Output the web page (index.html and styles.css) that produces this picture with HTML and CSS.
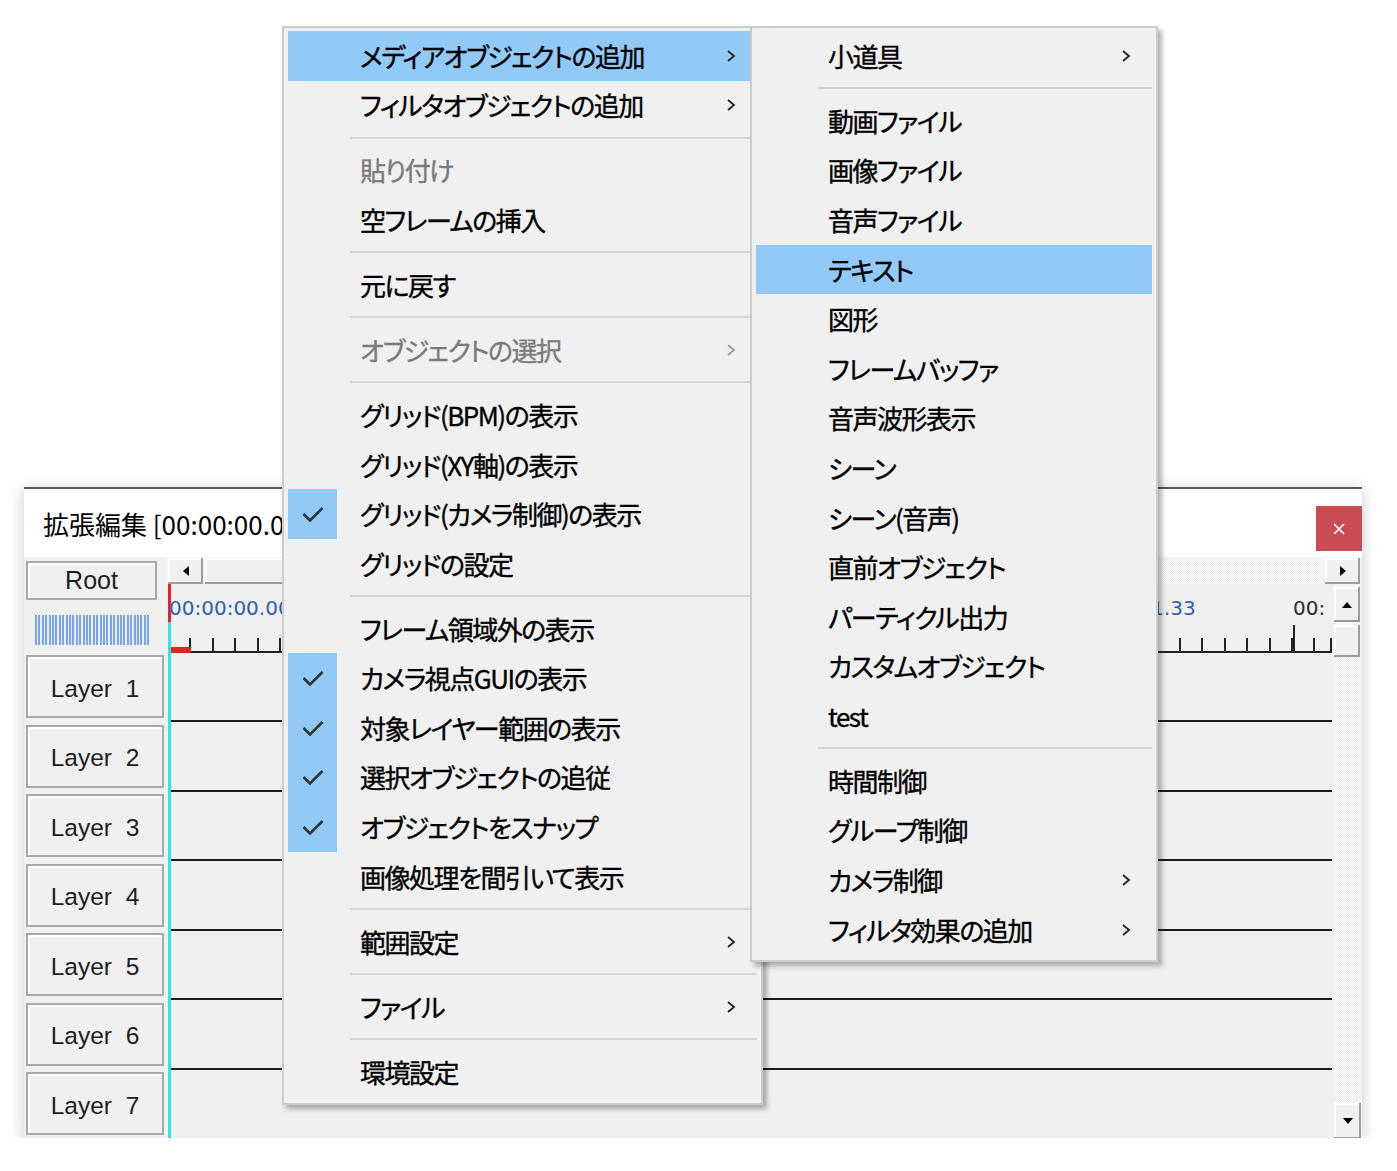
FILE: index.html
```html
<!DOCTYPE html>
<html lang="ja">
<head>
    <meta charset="UTF-8">
    <title>拡張編集</title>
    <link rel="stylesheet" href="styles.css">
</head>
<body>
    <!-- タイムラインウィンドウ -->
    <div class="window">
        <div class="titlebar">
            <span class="title">拡張編集 [00:00:00.00] [1/1]</span>
            <button class="close-btn">
                <svg width="12" height="12" viewBox="0 0 12 12"><path d="M1 1l10 10M11 1L1 11" stroke="#fff" stroke-width="1.7"/></svg>
            </button>
        </div>
        <div class="client">
            <div class="head-top">
                <button class="btn root-btn">Root</button>
                <div class="meter"></div>
            </div>

            <div class="hscroll">
                <button class="btn harrow">
                    <svg width="6" height="10" viewBox="0 0 6 10"><path d="M6 0v10L0 5z" fill="#000"/></svg>
                </button>
                <div class="btn hthumb"></div>
                <div class="spacer"></div>
                <button class="btn harrow">
                    <svg width="6" height="10" viewBox="0 0 6 10"><path d="M0 0v10l6-5z" fill="#000"/></svg>
                </button>
            </div>

            <div class="ruler">
                <span class="time t0">00:00:00.00</span>
                <span class="time t1">00:00:01.33</span>
                <span class="time t2 dark">00:</span>
                <div class="major m2"></div>
                <div class="ticks"></div>
                <div class="cursor-mark"></div>
            </div>

            <div class="vscroll">
                <button class="btn vup">
                    <svg width="10" height="6" viewBox="0 0 10 6"><path d="M0 6h10L5 0z" fill="#000"/></svg>
                </button>
                <div class="btn vthumb"></div>
                <div class="spacer"></div>
                <button class="btn vdown">
                    <svg width="10" height="6" viewBox="0 0 10 6"><path d="M0 0h10L5 6z" fill="#000"/></svg>
                </button>
            </div>

            <div class="layers">
                <div class="layer-row"><button class="btn layer-btn">Layer  1</button></div>
                <div class="layer-row"><button class="btn layer-btn">Layer  2</button></div>
                <div class="layer-row"><button class="btn layer-btn">Layer  3</button></div>
                <div class="layer-row"><button class="btn layer-btn">Layer  4</button></div>
                <div class="layer-row"><button class="btn layer-btn">Layer  5</button></div>
                <div class="layer-row"><button class="btn layer-btn">Layer  6</button></div>
                <div class="layer-row"><button class="btn layer-btn">Layer  7</button></div>
            </div>

            <div class="tracks">
                <div class="track"></div>
                <div class="track"></div>
                <div class="track"></div>
                <div class="track"></div>
                <div class="track"></div>
                <div class="track"></div>
                <div class="track"></div>
            </div>
        </div>
    </div>

    <!-- 右クリックメニュー -->
    <div class="menu main-menu">
        <div class="item active"><span class="check"></span><span class="label">メディアオブジェクトの追加</span><span class="sub"><svg width="10" height="14" viewBox="0 0 10 14"><path d="M2 2l6 5-6 5" fill="none" stroke="currentColor" stroke-width="1.8"/></svg></span></div>
        <div class="item"><span class="check"></span><span class="label">フィルタオブジェクトの追加</span><span class="sub"><svg width="10" height="14" viewBox="0 0 10 14"><path d="M2 2l6 5-6 5" fill="none" stroke="currentColor" stroke-width="1.8"/></svg></span></div>
        <div class="sep"></div>
        <div class="item disabled"><span class="check"></span><span class="label">貼り付け</span><span class="sub"></span></div>
        <div class="item"><span class="check"></span><span class="label">空フレームの挿入</span><span class="sub"></span></div>
        <div class="sep"></div>
        <div class="item"><span class="check"></span><span class="label">元に戻す</span><span class="sub"></span></div>
        <div class="sep"></div>
        <div class="item disabled"><span class="check"></span><span class="label">オブジェクトの選択</span><span class="sub"><svg width="10" height="14" viewBox="0 0 10 14"><path d="M2 2l6 5-6 5" fill="none" stroke="currentColor" stroke-width="1.8"/></svg></span></div>
        <div class="sep"></div>
        <div class="item"><span class="check"></span><span class="label">グリッド(BPM)の表示</span><span class="sub"></span></div>
        <div class="item"><span class="check"></span><span class="label">グリッド(XY軸)の表示</span><span class="sub"></span></div>
        <div class="item checked"><span class="check"><svg width="22" height="16" viewBox="0 0 22 16"><path d="M1.5 8l6.5 6.5L20.5 2" fill="none" stroke="#333" stroke-width="2.6"/></svg></span><span class="label">グリッド(カメラ制御)の表示</span><span class="sub"></span></div>
        <div class="item"><span class="check"></span><span class="label">グリッドの設定</span><span class="sub"></span></div>
        <div class="sep"></div>
        <div class="item"><span class="check"></span><span class="label">フレーム領域外の表示</span><span class="sub"></span></div>
        <div class="item checked"><span class="check"><svg width="22" height="16" viewBox="0 0 22 16"><path d="M1.5 8l6.5 6.5L20.5 2" fill="none" stroke="#333" stroke-width="2.6"/></svg></span><span class="label">カメラ視点GUIの表示</span><span class="sub"></span></div>
        <div class="item checked"><span class="check"><svg width="22" height="16" viewBox="0 0 22 16"><path d="M1.5 8l6.5 6.5L20.5 2" fill="none" stroke="#333" stroke-width="2.6"/></svg></span><span class="label">対象レイヤー範囲の表示</span><span class="sub"></span></div>
        <div class="item checked"><span class="check"><svg width="22" height="16" viewBox="0 0 22 16"><path d="M1.5 8l6.5 6.5L20.5 2" fill="none" stroke="#333" stroke-width="2.6"/></svg></span><span class="label">選択オブジェクトの追従</span><span class="sub"></span></div>
        <div class="item checked"><span class="check"><svg width="22" height="16" viewBox="0 0 22 16"><path d="M1.5 8l6.5 6.5L20.5 2" fill="none" stroke="#333" stroke-width="2.6"/></svg></span><span class="label">オブジェクトをスナップ</span><span class="sub"></span></div>
        <div class="item"><span class="check"></span><span class="label">画像処理を間引いて表示</span><span class="sub"></span></div>
        <div class="sep"></div>
        <div class="item"><span class="check"></span><span class="label">範囲設定</span><span class="sub"><svg width="10" height="14" viewBox="0 0 10 14"><path d="M2 2l6 5-6 5" fill="none" stroke="currentColor" stroke-width="1.8"/></svg></span></div>
        <div class="sep"></div>
        <div class="item"><span class="check"></span><span class="label">ファイル</span><span class="sub"><svg width="10" height="14" viewBox="0 0 10 14"><path d="M2 2l6 5-6 5" fill="none" stroke="currentColor" stroke-width="1.8"/></svg></span></div>
        <div class="sep"></div>
        <div class="item"><span class="check"></span><span class="label">環境設定</span><span class="sub"></span></div>
    </div>

    <!-- メディアオブジェクトのサブメニュー -->
    <div class="menu sub-menu">
        <div class="item"><span class="check"></span><span class="label">小道具</span><span class="sub"><svg width="10" height="14" viewBox="0 0 10 14"><path d="M2 2l6 5-6 5" fill="none" stroke="currentColor" stroke-width="1.8"/></svg></span></div>
        <div class="sep"></div>
        <div class="item"><span class="check"></span><span class="label">動画ファイル</span><span class="sub"></span></div>
        <div class="item"><span class="check"></span><span class="label">画像ファイル</span><span class="sub"></span></div>
        <div class="item"><span class="check"></span><span class="label">音声ファイル</span><span class="sub"></span></div>
        <div class="item active"><span class="check"></span><span class="label">テキスト</span><span class="sub"></span></div>
        <div class="item"><span class="check"></span><span class="label">図形</span><span class="sub"></span></div>
        <div class="item"><span class="check"></span><span class="label">フレームバッファ</span><span class="sub"></span></div>
        <div class="item"><span class="check"></span><span class="label">音声波形表示</span><span class="sub"></span></div>
        <div class="item"><span class="check"></span><span class="label">シーン</span><span class="sub"></span></div>
        <div class="item"><span class="check"></span><span class="label">シーン(音声)</span><span class="sub"></span></div>
        <div class="item"><span class="check"></span><span class="label">直前オブジェクト</span><span class="sub"></span></div>
        <div class="item"><span class="check"></span><span class="label">パーティクル出力</span><span class="sub"></span></div>
        <div class="item"><span class="check"></span><span class="label">カスタムオブジェクト</span><span class="sub"></span></div>
        <div class="item"><span class="check"></span><span class="label">test</span><span class="sub"></span></div>
        <div class="sep"></div>
        <div class="item"><span class="check"></span><span class="label">時間制御</span><span class="sub"></span></div>
        <div class="item"><span class="check"></span><span class="label">グループ制御</span><span class="sub"></span></div>
        <div class="item"><span class="check"></span><span class="label">カメラ制御</span><span class="sub"><svg width="10" height="14" viewBox="0 0 10 14"><path d="M2 2l6 5-6 5" fill="none" stroke="currentColor" stroke-width="1.8"/></svg></span></div>
        <div class="item"><span class="check"></span><span class="label">フィルタ効果の追加</span><span class="sub"><svg width="10" height="14" viewBox="0 0 10 14"><path d="M2 2l6 5-6 5" fill="none" stroke="currentColor" stroke-width="1.8"/></svg></span></div>
    </div>
</body>
</html>
```

FILE: styles.css
```css
body {
    margin: 0;
    padding: 487px 0 0 24px;
    background: #fff;
    font-family: "Noto Sans CJK JP", sans-serif;
}

/* ウィンドウ */
.window {
    width: 1338px;
    height: 649px;
    border-top: 2px solid #5a5a5a;
    background: #fff;
    box-shadow: 0 3px 14px rgba(0, 0, 0, 0.22);
    overflow: hidden;
    display: flex;
    flex-direction: column;
}
.titlebar {
    height: 68px;
    flex-shrink: 0;
    display: flex;
    align-items: center;
    padding-left: 19px;
}
.title {
    font-size: 26px;
    color: #000;
    white-space: nowrap;
}
.close-btn {
    margin-left: auto;
    align-self: flex-start;
    margin-top: 17px;
    width: 46px;
    height: 45px;
    border: none;
    padding: 0;
    background: #c84c51;
    display: flex;
    align-items: center;
    justify-content: center;
}

/* クライアント領域 */
.client {
    flex: 1;
    background: #f0f0f0;
    display: grid;
    grid-template-columns: 142px 1fr 28px;
    grid-template-rows: 27px 68.5px 1fr;
    overflow: hidden;
}
.btn {
    background: #f0f0f0;
    border: none;
    padding: 0;
    box-shadow: inset -2px -2px #9c9c9c, inset 2px 2px #fff;
    display: flex;
    align-items: center;
    justify-content: center;
}
.head-top {
    grid-column: 1;
    grid-row: 1 / 3;
    padding: 4px 0 0 2px;
}
.root-btn {
    width: 131px;
    height: 39px;
    border: 2px solid #a8a8a8;
    box-shadow: inset 2px 2px #fff;
    font-family: "Liberation Sans", sans-serif;
    font-size: 25px;
    color: #1e1e1e;
}
.meter {
    width: 115px;
    height: 30px;
    margin: 15px 0 0 9px;
    background: repeating-linear-gradient(90deg, #78a2f2 0 2px, transparent 2px 3.4px);
}

/* 横スクロールバー */
.hscroll {
    grid-column: 2 / 4;
    grid-row: 1;
    display: flex;
    padding: 1px 2px 0;
    background: repeating-conic-gradient(#ececec 0 25%, #fbfbfb 0 50%) 0 0 / 2px 2px;
}
.harrow {
    width: 35px;
    height: 26px;
}
.hthumb {
    width: 196px;
    margin-left: 2px;
}
.spacer {
    flex: 1;
}

/* ルーラー */
.ruler {
    grid-column: 2;
    grid-row: 2;
    position: relative;
    overflow: hidden;
    display: flex;
    flex-direction: column;
    justify-content: flex-end;
}
.ruler::before {
    content: "";
    position: absolute;
    left: 2px;
    top: 0;
    bottom: 0;
    width: 3px;
    background: linear-gradient(#e42222 0 38px, #2fe4ec 38px);
}
.time {
    position: absolute;
    top: 14px;
    font-family: "DejaVu Sans", sans-serif;
    font-size: 20px;
    line-height: 20px;
    color: #2d5fae;
    white-space: nowrap;
}
.time.dark {
    color: #2a2a2a;
}
.t0 { left: 3px; }
.t1 { left: 908px; }
.t2 { left: 1127px; }
.major {
    position: absolute;
    bottom: 0;
    width: 2px;
    height: 28px;
    background: #222;
}
.m2 { left: 1127px; }
.ticks {
    height: 13px;
    margin: 0 2px 0 3px;
    border-bottom: 2px solid #222;
    background: repeating-linear-gradient(90deg, #222 0 2px, transparent 2px 22.48px) -2px 0;
}
.cursor-mark {
    position: absolute;
    left: 5px;
    bottom: 0;
    width: 20px;
    height: 6px;
    background: #e42222;
}

/* 縦スクロールバー */
.vscroll {
    grid-column: 3;
    grid-row: 2 / 4;
    display: flex;
    flex-direction: column;
    padding-top: 3px;
    background: repeating-conic-gradient(#ececec 0 25%, #fbfbfb 0 50%) 0 0 / 2px 2px;
}
.vup {
    width: 26px;
    height: 35px;
}
.vthumb {
    width: 26px;
    height: 32px;
    margin-top: 3px;
}
.vdown {
    width: 27px;
    height: 36px;
}

/* レイヤー */
.layers {
    grid-column: 1;
    grid-row: 3;
    display: flex;
    flex-direction: column;
}
.layer-row {
    height: 69.5px;
    flex-shrink: 0;
    padding: 2.5px 2px 4px;
    box-sizing: border-box;
}
.layer-btn {
    width: 138px;
    height: 63px;
    border: 2px solid #a8a8a8;
    box-shadow: inset 2px 2px #fff;
    font-family: "Liberation Sans", sans-serif;
    font-size: 24.5px;
    color: #1e1e1e;
    white-space: pre;
    padding-top: 4px;
}
.tracks {
    grid-column: 2;
    grid-row: 3;
    margin: 0 2px 0 2px;
    border-left: 3px solid #2fe4ec;
    display: flex;
    flex-direction: column;
}
.track {
    height: 69.5px;
    flex-shrink: 0;
    box-sizing: border-box;
    border-bottom: 2px solid #1c1c1c;
}
.track:last-child {
    border-bottom: none;
}

/* メニュー */
.menu {
    position: absolute;
    top: 26px;
    background: #f0f0f0;
    border: 2px solid #cdcdcd;
    padding: 3px 4px 7px;
    box-shadow: 4px 4px 5px rgba(0, 0, 0, 0.3);
    font-size: 26px;
    font-feature-settings: "palt";
    letter-spacing: -1.5px;
    -webkit-text-stroke: 0.35px currentColor;
    color: #000;
}
.main-menu {
    left: 282px;
    width: 469px;
}
.sub-menu {
    left: 750px;
    width: 396px;
    padding-bottom: 6px;
}
.item {
    height: 49.6px;
    display: grid;
    grid-template-columns: 49px 1fr 52px;
}
.item.active {
    background: #91c9f7;
}
.check {
    display: flex;
    align-items: center;
    justify-content: center;
}
.item.checked .check {
    background: #91c9f7;
}
.label {
    align-self: center;
    padding-left: 23px;
    line-height: 1;
    white-space: nowrap;
}
.sub {
    display: flex;
    align-items: center;
    justify-content: center;
    color: #222;
}
.item.disabled {
    color: #7a7a7a;
}
.item.disabled .sub {
    color: #9a9a9a;
}
.sep {
    height: 15.4px;
    display: flex;
    align-items: center;
    padding-left: 62px;
}
.sep::after {
    content: "";
    flex: 1;
    height: 2px;
    background: #d5d5d5;
}
```
